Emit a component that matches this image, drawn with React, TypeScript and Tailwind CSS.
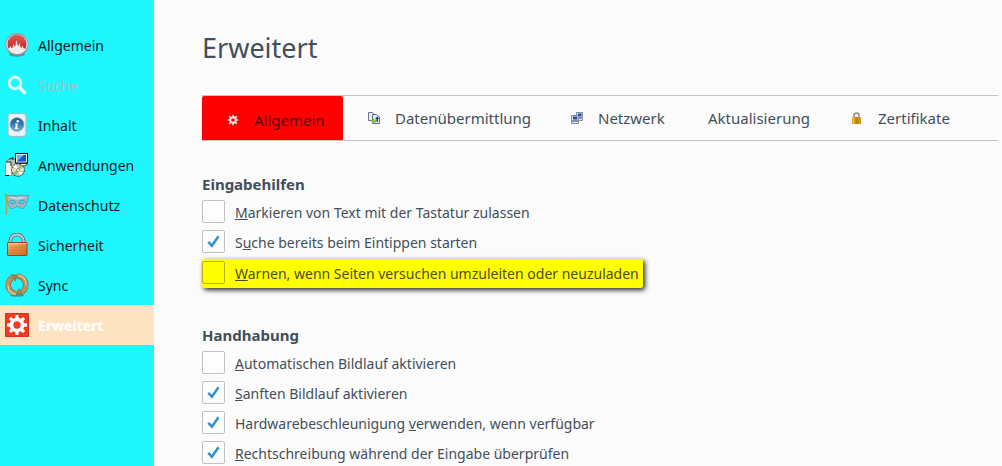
import { useState } from "react";
import type { ReactNode } from "react";

function FlameIcon() {
  return (
    <svg width="24" height="24" viewBox="0 0 24 24" aria-hidden="true">
      <defs>
        <linearGradient id="flame-rim" x1="0" y1="0" x2="0" y2="1">
          <stop offset="0" stopColor="#a9a9a9" />
          <stop offset="0.5" stopColor="#e6e3e3" />
          <stop offset="1" stopColor="#8e8888" />
        </linearGradient>
        <linearGradient id="flame-red" x1="0" y1="0" x2="0" y2="1">
          <stop offset="0" stopColor="#e05a55" />
          <stop offset="1" stopColor="#b3191b" />
        </linearGradient>
      </defs>
      <ellipse cx="12" cy="21.5" rx="8" ry="2.2" fill="#2f6f74" opacity="0.6" />
      <circle cx="12" cy="11.5" r="11.2" fill="url(#flame-rim)" stroke="#877f80" strokeWidth="0.6" />
      <circle cx="12" cy="11.2" r="9.4" fill="url(#flame-red)" />
      <path
        d="M3.2 15c1.300.6 1.800-.6 2-2.200.9.800.8 2.400 1.600 2.400 1.300 0 .6-2.800 1.600-4.200.8 1 .5 2.400 1.300 2.400 1.500-.4.600-3.600 1.900-6.200 1 2.200.2 4.600 1.300 5.600 1.200.4.900-1.500 1.500-2.800 1 1.500.5 4.400 1.800 4.700 1 .1.700-1.300 1.200-2.100.8.900.6 2.800 1.700 3 .6 0 1.200-.2 1.700-.6C19.700 19 16 21 12 21s-7.500-2.200-8.800-6z"
        fill="#f1ecec"
      />
    </svg>
  );
}

function SearchIcon() {
  return (
    <svg width="24" height="24" viewBox="0 0 24 24" fill="none" aria-hidden="true">
      <circle cx="10" cy="10" r="5.8" stroke="#dffcff" strokeWidth="2.8" />
      <path d="M14.5 14.5l5 5" stroke="#dffcff" strokeWidth="3.6" strokeLinecap="round" />
    </svg>
  );
}

function InfoIcon() {
  return (
    <svg width="24" height="24" viewBox="0 0 24 24" aria-hidden="true">
      <defs>
        <linearGradient id="info-ball" x1="0" y1="0" x2="0" y2="1">
          <stop offset="0" stopColor="#1f5c96" />
          <stop offset="0.5" stopColor="#2f7ab5" />
          <stop offset="1" stopColor="#7fc0e6" />
        </linearGradient>
      </defs>
      <rect x="3" y="0.5" width="18" height="23" rx="3" fill="#e3ebef" stroke="#a3bcc4" />
      <rect x="4.5" y="2" width="15" height="20" rx="2" fill="#eef2f5" />
      <circle cx="12" cy="11.5" r="6.8" fill="url(#info-ball)" stroke="#5d86a8" strokeWidth="0.7" />
      <circle cx="12.8" cy="8.2" r="1.3" fill="#fff" />
      <path d="M10.3 10.600h2.700l-1 4.200h1.200l-.3 1.200h-3l1-4.200h-1z" fill="#fff" />
    </svg>
  );
}

function InstallerIcon() {
  return (
    <svg width="24" height="24" viewBox="0 0 24 24" aria-hidden="true">
      <path d="M1 9l3-3h7v16H1z" fill="#b9bdb9" stroke="#777" strokeWidth="0.8" />
      <path d="M1 9h5v13H1z" fill="#f3f3ee" />
      <path d="M4.5 6L8 4.500V7M1 9h5v4" fill="none" stroke="#222" />
      <rect x="10.5" y="0.5" width="12" height="9.5" fill="#e8e6da" stroke="#111" />
      <rect x="12" y="2" width="9" height="6.5" fill="#1450d8" />
      <path d="M12 8.500V2h7z" fill="#64b5f6" />
      <path d="M13 10.500h10l-3 2.500h-8z" fill="#eee" stroke="#111" strokeWidth="0.8" />
      <circle cx="13" cy="17" r="6.300" fill="#c3c9c3" stroke="#222" strokeDasharray="2 1" />
      <path d="M13 17L8 13.500 11 11.500zM13 17l5 3-3 2.500z" fill="#fff" />
      <path d="M13 17l1.500-5.500 3 1.800zM13 17l-2 5.500-3-2z" fill="#86c54a" />
      <path d="M13 17l5.800-2v3zM13 17l-6 1.200.2-3z" fill="#f0e9a5" />
      <circle cx="13" cy="17" r="1.500" fill="#fff" stroke="#555" strokeWidth="0.6" />
      <path d="M0 22.500h4" fill="none" stroke="#111" />
    </svg>
  );
}

function MaskIcon() {
  return (
    <svg width="24" height="24" viewBox="0 0 24 24" aria-hidden="true">
      <path
        d="M.8 2c3 1.300 5.700.3 8.200.3 1.300 0 2 .7 3.200.7s2-.7 3.300-.7c2.500 0 5 1 8-.3 0 3-.8 5-1.700 7.500-.8 3.500-2 6-4.500 6-2.400 0-3.500-2-5.100-2s-2.700 2-5.100 2c-2.700 0-3.500-2.500-4.300-6C2 7 .8 5 .8 2z"
        fill="#9bb8c8"
        stroke="#64879b"
        strokeWidth="0.7"
      />
      <path d="M3 4c4 .6 6-.6 9 1 3-1.600 5-.4 9.300-1-2 2-5 1.500-9.300 2.500C8 5.500 5 6 3 4z" fill="#cbdae3" />
      <path
        d="M4.500 8.500c1.500-2 4.500-1.500 6 1-1.500 1.700-5 1.500-6-1zM19.800 8.500c-1.500-2-4.500-1.500-6 1 1.500 1.700 5 1.500 6-1z"
        fill="#24edf8"
        stroke="#5d7c90"
        strokeWidth="0.8"
      />
      <path d="M1.500 1v21" stroke="#b7a341" strokeWidth="1.800" />
    </svg>
  );
}

function PadlockIcon() {
  return (
    <svg width="24" height="24" viewBox="0 0 24 24" aria-hidden="true">
      <defs>
        <linearGradient id="padlock-body" x1="0" y1="0" x2="1" y2="1">
          <stop offset="0" stopColor="#f7bd88" />
          <stop offset="0.45" stopColor="#e58a44" />
          <stop offset="1" stopColor="#d06c25" />
        </linearGradient>
      </defs>
      <path d="M5.300 11V8.200a6.700 6.700 0 0113.400 0V11" fill="none" stroke="#5c686c" strokeWidth="3.6" />
      <path d="M5.300 11V8.200a6.700 6.700 0 0113.400 0V11" fill="none" stroke="#bfcdd1" strokeWidth="1.9" />
      <rect x="2.500" y="9.500" width="19.500" height="13" rx="0.8" fill="url(#padlock-body)" stroke="#944614" />
      <path d="M3.500 10.700h17.500" stroke="#f8c898" />
      <path d="M3.500 14h17.500M3.500 17h17.500M3.500 20h17.500" stroke="#c56a28" strokeWidth="0.4" />
    </svg>
  );
}

function SyncIcon() {
  return (
    <svg width="24" height="24" viewBox="0 0 24 24" fill="none" aria-hidden="true">
      <ellipse cx="12" cy="22.500" rx="7" ry="1.300" fill="#27888c" opacity="0.7" />
      <path d="M12.500 3.200a8.600 8.600 0 014.500 15.700" stroke="#7d6337" strokeWidth="5.4" />
      <path d="M11.500 20.500A8.600 8.600 0 017 4.800" stroke="#7d6337" strokeWidth="5.4" />
      <path d="M12.500 3.200a8.600 8.600 0 014.500 15.700" stroke="#c0935a" strokeWidth="4.2" />
      <path d="M11.500 20.500A8.600 8.600 0 017 4.800" stroke="#c0935a" strokeWidth="4.2" />
      <path d="M13 2.400c5 .5 8 4 8 9M11 21.300c-5-.5-8-4-8-9" stroke="#e6c898" strokeWidth="1.3" />
      <path d="M6 1.700L12.600 2 10 8.200z" fill="#a98046" stroke="#7d6337" strokeWidth="0.6" />
      <path d="M18 22l-6.600-.5 2.600-6z" fill="#a98046" stroke="#7d6337" strokeWidth="0.6" />
    </svg>
  );
}

const gearTeeth = [0, 45, 90, 135, 180, 225, 270, 315];

function GearTileIcon() {
  return (
    <svg width="24" height="24" viewBox="0 0 24 24" aria-hidden="true">
      <rect width="24" height="24" rx="0.8" fill="#d9301c" />
      <rect x="0.8" y="0.8" width="22.4" height="22.4" fill="#ee3b24" />
      <g fill="#fff">
        {gearTeeth.map((angle) => (
          <path key={angle} d="M10.100 6l.5-4h2.800l.5 4z" transform={`rotate(${angle} 12 12)`} />
        ))}
      </g>
      <circle cx="12" cy="12" r="5.500" fill="none" stroke="#fff" strokeWidth="3.600" />
    </svg>
  );
}

function GearIcon() {
  return (
    <svg width="12" height="12" viewBox="0 0 24 24" aria-hidden="true">
      <g fill="#f6eaea" stroke="#8a2020" strokeWidth="0.8">
        {gearTeeth.map((angle) => (
          <path key={angle} d="M10 6l.4-5h3.200l.4 5z" transform={`rotate(${angle} 12 12)`} />
        ))}
      </g>
      <circle cx="12" cy="12" r="5.600" fill="none" stroke="#f6eaea" strokeWidth="3.800" />
    </svg>
  );
}

function TransferIcon() {
  return (
    <svg width="12" height="12" viewBox="0 0 12 12" aria-hidden="true">
      <path d="M.5.500h4l2 2v6h-6z" fill="#e6ecf2" stroke="#66788c" />
      <path d="M4.500 2.500h4l3 2.500v6.500h-7z" fill="#dfe9f3" stroke="#5c7088" />
      <path d="M3 9l3-3v1.500h2v3H6V12z" fill="#8fc31c" />
      <path d="M9.200 4.500l2 2.200h-1.200v3H8.500v-3H7.300z" fill="#14386e" />
    </svg>
  );
}

function NetworkIcon() {
  return (
    <svg width="12" height="12" viewBox="0 0 12 12" aria-hidden="true">
      <rect x="5.500" y="0.500" width="6" height="5" fill="#dfe5ec" stroke="#8793a3" />
      <rect x="7" y="1.500" width="3.500" height="3" fill="#2749a8" />
      <path d="M7.500 6.500h4v2h-4z" fill="#e3e7eb" stroke="#8793a3" />
      <rect x="0.500" y="3.500" width="6.500" height="5" fill="#dfe5ec" stroke="#8793a3" />
      <rect x="2" y="4.500" width="4" height="3" fill="#2749a8" />
      <rect x="0.500" y="9.500" width="7" height="2" fill="#e3e7eb" stroke="#8793a3" />
    </svg>
  );
}

function CertificateIcon() {
  return (
    <svg width="12" height="12" viewBox="0 0 12 12" aria-hidden="true">
      <path d="M3 6V3.500a2.500 2.500 0 015 0V6" fill="none" stroke="#8b8b86" strokeWidth="1.500" />
      <rect x="1" y="5" width="9" height="7" rx="0.5" fill="#d39a17" />
      <path d="M4.500 5.500h3V12h-3z" fill="#c27c08" />
      <path d="M1.500 5.500H3v6H1.500z" fill="#ecc45c" />
    </svg>
  );
}

type Category = { label: string; icon: ReactNode; look: string };

const categories: Category[] = [
  { label: "Allgemein", icon: <FlameIcon />, look: "text-[#0c2022]" },
  { label: "Suche", icon: <SearchIcon />, look: "text-[#9cc5c8]" },
  { label: "Inhalt", icon: <InfoIcon />, look: "text-[#0c2022]" },
  { label: "Anwendungen", icon: <InstallerIcon />, look: "text-[#0c2022]" },
  { label: "Datenschutz", icon: <MaskIcon />, look: "text-[#0c2022]" },
  { label: "Sicherheit", icon: <PadlockIcon />, look: "text-[#0c2022]" },
  { label: "Sync", icon: <SyncIcon />, look: "text-[#0c2022]" },
  { label: "Erweitert", icon: <GearTileIcon />, look: "bg-[#ffe4c4] font-bold text-white" },
];

type Tab = { label: string; icon?: ReactNode; width: string };

const tabs: Tab[] = [
  { label: "Allgemein", icon: <GearIcon />, width: "w-[141px]" },
  { label: "Datenübermittlung", icon: <TransferIcon />, width: "w-[203px]" },
  { label: "Netzwerk", icon: <NetworkIcon />, width: "w-[137px]" },
  { label: "Aktualisierung", width: "w-[143px]" },
  { label: "Zertifikate", icon: <CertificateIcon />, width: "w-[141px]" },
];

type OptionProps = { id: string; initial?: boolean; highlighted?: boolean; children: ReactNode };

function Option({ id, initial = false, highlighted = false, children }: OptionProps) {
  const [checked, setChecked] = useState(initial);
  const row = highlighted
    ? "mt-0.5 h-[29px] w-fit rounded-xs bg-[#ffff00] pt-0.5 pr-1 text-[#4d4d1c] shadow-[2px_2px_5px_#222]"
    : "h-[30px] pt-[3px] text-[#424f5a]";
  const box = highlighted
    ? "border-[#b5b500] bg-transparent"
    : "border-[#c1c1c1] bg-linear-to-b from-white to-[#fbfbfb]";
  return (
    <div className={`flex items-start gap-[10px] ${row}`}>
      <span className="grid size-[23px] shrink-0 place-items-center">
        <input
          id={id}
          type="checkbox"
          checked={checked}
          onChange={(event) => setChecked(event.target.checked)}
          className={`col-start-1 row-start-1 size-[23px] appearance-none rounded-xs border ${box}`}
        />
        {checked && (
          <svg
            width="13"
            height="13"
            viewBox="0 0 13 13"
            fill="none"
            aria-hidden="true"
            className="pointer-events-none col-start-1 row-start-1"
          >
            <path d="M1.300 6.800L4.900 10.700 11.500 1.200" stroke="#2f93d2" strokeWidth="2.500" />
          </svg>
        )}
      </span>
      <label htmlFor={id} className="leading-[26px] whitespace-nowrap">
        {children}
      </label>
    </div>
  );
}

export default function App() {
  return (
    <div className="flex min-h-screen bg-[#fbfbfb] font-['Noto_Sans','Open_Sans',sans-serif] text-sm text-[#424f5a]">
      <nav className="w-[154px] shrink-0 bg-[#1ff7ff] pt-[25px]">
        {categories.map(({ label, icon, look }) => (
          <a key={label} href="#" className={`flex h-10 items-center gap-[9px] pl-[5px] ${look}`}>
            {icon}
            <span className="pt-0.5">{label}</span>
          </a>
        ))}
      </nav>

      <main className="min-w-0 grow pt-7 pr-1 pl-12">
        <h1 className="text-[27px] leading-10">Erweitert</h1>

        <div role="tablist" className="mt-[27px] flex h-[46px] border-y border-[#c1c1c1] text-[15px]">
          {tabs.map(({ label, icon, width }, index) => (
            <button
              key={label}
              type="button"
              role="tab"
              aria-selected={index === 0}
              className={`flex shrink-0 items-center gap-[15px] pl-[25px] whitespace-nowrap ${width} ${
                index === 0 ? "rounded-t-xs bg-[#ff0000] pt-1 text-[#4a1010]" : ""
              }`}
            >
              {icon}
              <span className="pt-0.5">{label}</span>
            </button>
          ))}
        </div>

        <section className="mt-8">
          <h2 className="mb-0.5 text-[15px] leading-[22px] font-bold">Eingabehilfen</h2>
          <Option id="mark-text">
            <u>M</u>arkieren von Text mit der Tastatur zulassen
          </Option>
          <Option id="search-typing" initial>
            S<u>u</u>che bereits beim Eintippen starten
          </Option>
          <Option id="warn-redirect" highlighted>
            <u>W</u>arnen, wenn Seiten versuchen umzuleiten oder neuzuladen
          </Option>
        </section>

        <section className="mt-9">
          <h2 className="mb-0.5 text-[15px] leading-[22px] font-bold">Handhabung</h2>
          <Option id="auto-scroll">
            <u>A</u>utomatischen Bildlauf aktivieren
          </Option>
          <Option id="smooth-scroll" initial>
            <u>S</u>anften Bildlauf aktivieren
          </Option>
          <Option id="hardware" initial>
            Hardwarebeschleunigung <u>v</u>erwenden, wenn verfügbar
          </Option>
          <Option id="spelling" initial>
            <u>R</u>echtschreibung während der Eingabe überprüfen
          </Option>
        </section>
      </main>
    </div>
  );
}
